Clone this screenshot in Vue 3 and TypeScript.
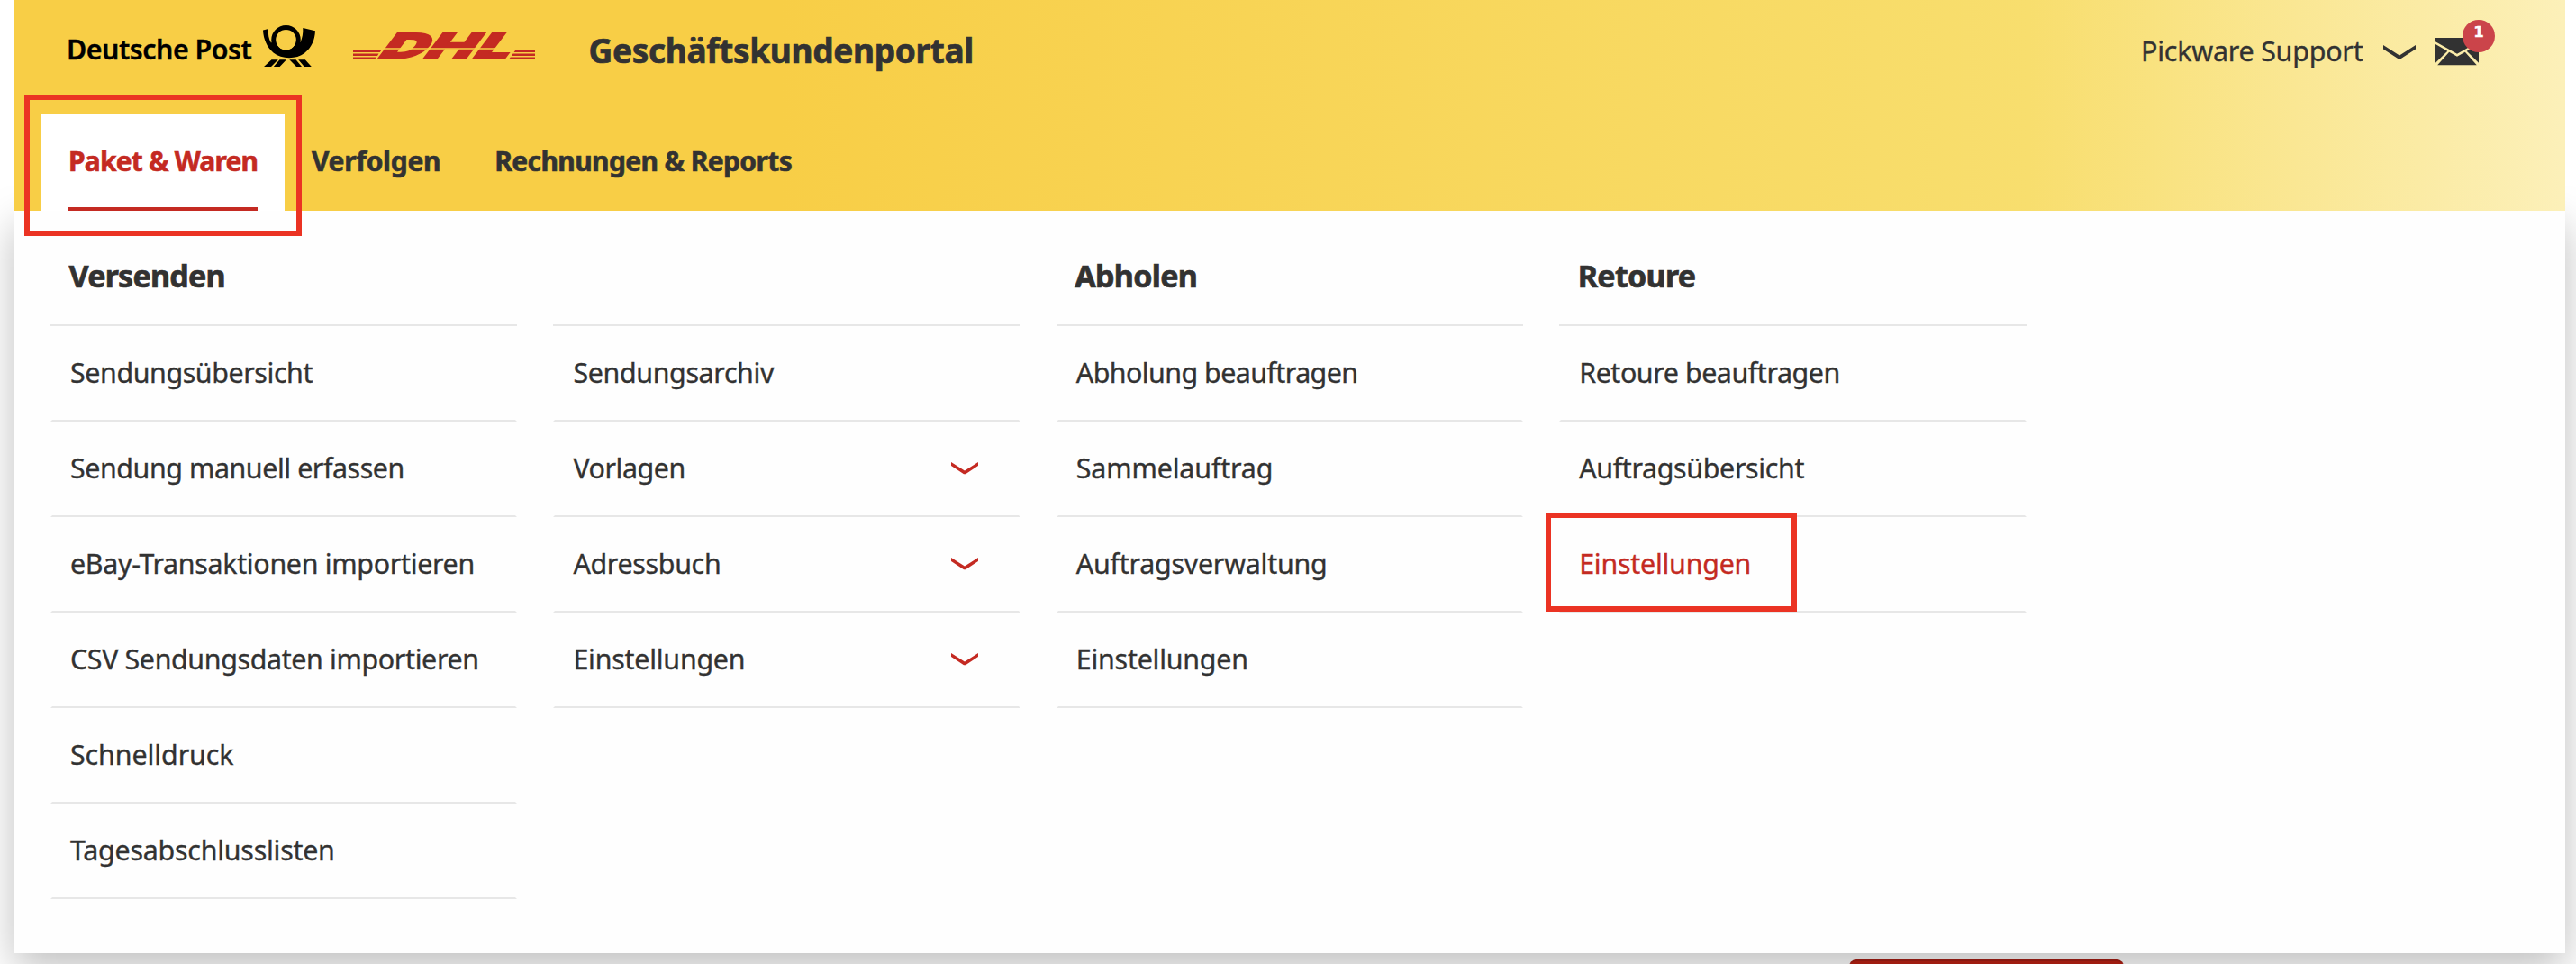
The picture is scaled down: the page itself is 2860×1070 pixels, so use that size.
<script setup lang="ts">
interface MenuItem {
  label: string
  /** letter-spacing in px */
  tracking: number
  expandable?: boolean
  active?: boolean
}

interface MenuColumn {
  title: string
  tracking: number
  items: MenuItem[]
}

interface Tab {
  label: string
  tracking: number
  active?: boolean
}

const tabs: Tab[] = [
  { label: 'Paket & Waren', tracking: -0.81, active: true },
  { label: 'Verfolgen', tracking: -0.3 },
  { label: 'Rechnungen & Reports', tracking: -0.62 },
]

const columns: MenuColumn[] = [
  {
    title: 'Versenden',
    tracking: -0.77,
    items: [
      { label: 'Sendungsübersicht', tracking: -0.41 },
      { label: 'Sendung manuell erfassen', tracking: -0.44 },
      { label: 'eBay-Transaktionen importieren', tracking: -0.32 },
      { label: 'CSV Sendungsdaten importieren', tracking: -0.37 },
      { label: 'Schnelldruck', tracking: -0.09 },
      { label: 'Tagesabschlusslisten', tracking: -0.24 },
    ],
  },
  {
    title: '',
    tracking: 0,
    items: [
      { label: 'Sendungsarchiv', tracking: -0.36 },
      { label: 'Vorlagen', tracking: -0.47, expandable: true },
      { label: 'Adressbuch', tracking: -0.32, expandable: true },
      { label: 'Einstellungen', tracking: -0.24, expandable: true },
    ],
  },
  {
    title: 'Abholen',
    tracking: -0.73,
    items: [
      { label: 'Abholung beauftragen', tracking: -0.56 },
      { label: 'Sammelauftrag', tracking: -0.16 },
      { label: 'Auftragsverwaltung', tracking: -0.24 },
      { label: 'Einstellungen', tracking: -0.24 },
    ],
  },
  {
    title: 'Retoure',
    tracking: -0.69,
    items: [
      { label: 'Retoure beauftragen', tracking: -0.43 },
      { label: 'Auftragsübersicht', tracking: -0.34 },
      { label: 'Einstellungen', tracking: -0.24, active: true },
    ],
  },
]
</script>

<template>
  <div class="page">
    <header class="header">
      <div class="brand-row">
        <span class="post-name">Deutsche Post</span>
        <svg class="horn" viewBox="0 0 58 46" width="58" height="46" aria-hidden="true">
          <circle cx="25.5" cy="16.3" r="13.8" fill="none" stroke="#000" stroke-width="4.9" />
          <path
            d="M0 5.6 6 3.9C5.4 10.500 6.400 15 9 19.500L14.100 16.500A11.400 11.400 0 0 0 36.900 16.500L41.500 19C43.600 14 44.600 9.500 44.300 3L58 6.200C57.500 16.500 54 24.500 46 31 37 38 20.500 38 11.500 30.500 4.500 24.500.5 16 0 5.600Z"
          />
          <path d="M9.500 38.200H16.800L9 46H1ZM18.500 38.200H26L18.600 46H11.800ZM29.300 38.200H36.500L43 46H37ZM39.200 38.200H46.800L53.800 46H45.800Z" />
        </svg>
        <svg class="dhl" viewBox="0 0 202 30" width="202" height="30">
          <g fill="#c42a22">
            <path d="M0 19.500H31.500L29.700 22H0ZM0 23.600H28.500L27 25.900H0ZM0 27.400H25.800L24.100 29.800H0Z" />
            <path d="M180.400 19.500H202V22H178.600ZM177.500 23.600H202V25.900H175.900ZM174.800 27.400H202V29.800H173Z" />
            <text class="dhl-word" transform="translate(0 28.800) skewX(-37) scale(1.800 1)" x="13.900 42 72.300" y="0">DHL</text>
          </g>
          <path d="M36 18H170" stroke="#f8ce46" stroke-width="1.300" />
        </svg>
        <span class="portal">Geschäftskundenportal</span>
        <div class="account">
          <span class="user">Pickware Support</span>
          <svg class="user-arrow" viewBox="0 0 36 16" width="36" height="16" aria-hidden="true">
            <path d="M0 0 18 11.400 36 0V4.600L19 15.600H17L0 4.600Z" fill="#323232" />
          </svg>
          <div class="mail">
            <svg viewBox="0 0 48 31" width="48" height="31" aria-hidden="true">
              <path d="M0 0H48V4.200L24 17.700 0 4.200ZM0 7 13.300 14.700 0 27.800ZM48 7 34.700 14.700 48 27.800ZM15.200 15.800 24 20.700 32.800 15.800 45.800 30.300H2.200Z" fill="#323232" />
            </svg>
            <span class="badge">1</span>
          </div>
        </div>
      </div>
      <nav class="tabs">
        <a v-for="tab in tabs" :key="tab.label" class="tab" :class="{ active: tab.active }">
          <span class="tab-label" :style="{ letterSpacing: tab.tracking + 'px' }">{{ tab.label }}</span>
        </a>
      </nav>
      <div class="marker marker-tab"></div>
    </header>

    <section class="panel">
      <div v-for="(column, i) in columns" :key="i" class="column">
        <h2 class="title" :style="{ letterSpacing: column.tracking + 'px' }">{{ column.title }}</h2>
        <a v-for="item in column.items" :key="item.label" class="item" :class="{ active: item.active }">
          <span :style="{ letterSpacing: item.tracking + 'px' }">{{ item.label }}</span>
          <svg v-if="item.expandable" class="arrow" viewBox="0 0 30 13.500" width="30" height="13.500" aria-hidden="true">
            <path d="M0 0 15 9.600 30 0V4L16 13.200H14L0 4Z" fill="#c42a22" />
          </svg>
          <i v-if="item.active" class="marker marker-item"></i>
        </a>
      </div>
    </section>

    <div class="cta"></div>
  </div>
</template>

<style>
body {
  background: #fff;
  overflow: hidden;
}
</style>

<style scoped>
.page {
  box-sizing: border-box;
  width: 2860px;
  height: 1070px;
  padding: 0 12px 0 16px;
  overflow: hidden;
  position: relative;
  color: #323232;
  font-family: "Noto Sans", "Open Sans", sans-serif;
  font-size: 30.4px;
  line-height: 42px;
  -webkit-text-stroke: 0.35px currentColor;
}
.header {
  position: relative;
  z-index: 2;
  height: 234px;
  background: linear-gradient(90deg, #f8ce46 30%, #f8de6e 79%, #fcf0b9 100%);
}
.brand-row {
  display: flex;
  align-items: center;
  height: 112px;
  padding: 0 96px 0 58px;
}
.post-name {
  width: 218px;
  padding-bottom: 2px;
  color: #000;
  font-weight: 600;
  letter-spacing: -0.5px;
  white-space: nowrap;
}
.horn {
  margin: 0 42px 10px 0;
}
.dhl {
  margin: 0 59.5px 10px 0;
  overflow: visible;
}
.dhl-word {
  font-family: Inter, sans-serif;
  font-size: 39px;
  font-weight: 900;
  -webkit-text-stroke: 0;
  stroke: #c42a22;
  stroke-width: 1.5px;
}
.portal {
  font-size: 37px;
  font-weight: 700;
  letter-spacing: -0.34px;
  -webkit-text-stroke-width: 0.7px;
}
.account {
  display: flex;
  align-items: center;
  margin-left: auto;
}
.user {
  padding-top: 2px;
  letter-spacing: -0.2px;
}
.user-arrow {
  margin: 4px 22px 0 22.5px;
}
.mail {
  position: relative;
  width: 48px;
  height: 31px;
  margin-top: 3px;
}
.mail svg {
  display: block;
}
.badge {
  position: absolute;
  left: 30px;
  top: -20px;
  width: 36px;
  height: 36px;
  border-radius: 50%;
  background: #cb444a;
  color: #fff;
  font: 700 16.5px/27px "DejaVu Sans", sans-serif;
  text-align: center;
}
.tabs {
  display: flex;
  margin: 14px 0 0 30px;
}
.tab {
  height: 108px;
  padding: 0 30px;
  font-size: 30px;
  font-weight: 700;
  white-space: nowrap;
  -webkit-text-stroke-width: 0.6px;
}
.tab-label {
  display: block;
  height: 104px;
  line-height: 105px;
  border-bottom: 4px solid transparent;
}
.tab.active {
  background: #fff;
  color: #c42a22;
}
.tab.active .tab-label {
  width: 210px;
  border-color: #c42a22;
}
.marker {
  position: absolute;
  box-sizing: border-box;
  border: 6px solid #eb3323;
}
.marker-tab {
  left: 11px;
  top: 105px;
  width: 308px;
  height: 157px;
}
.marker-item {
  left: -17.5px;
  top: -7px;
  width: 279px;
  height: 110px;
}
.panel {
  position: relative;
  z-index: 1;
  box-sizing: border-box;
  display: flex;
  gap: 40px;
  height: 824px;
  padding-left: 40px;
  background: #fefefe;
  box-shadow: 0 16px 44px rgba(0, 0, 0, 0.26);
}
.column {
  width: 518.4px;
}
.title {
  box-sizing: border-box;
  height: 128px;
  margin: 0;
  padding: 18px 20px 0 20.5px;
  border-bottom: 2px solid #e7e7e7;
  font-size: 34px;
  font-weight: 700;
  line-height: 108px;
  -webkit-text-stroke-width: 0.7px;
}
.item {
  position: relative;
  box-sizing: border-box;
  display: flex;
  align-items: center;
  justify-content: space-between;
  height: 106px;
  padding: 0 44.5px 3px 20px;
  border: 2px solid transparent;
  border-bottom-color: #e7e7e7;
  white-space: nowrap;
}
.item.active {
  color: #c42a22;
}
.arrow {
  margin-bottom: -7px;
  transform: translateY(-3px);
}
.cta {
  position: relative;
  z-index: 2;
  box-sizing: border-box;
  width: 305px;
  height: 40px;
  margin: 7px 0 0 2037px;
  border-top: 2px solid #8a1911;
  border-radius: 8px;
  background: #9f1c10;
}
</style>
